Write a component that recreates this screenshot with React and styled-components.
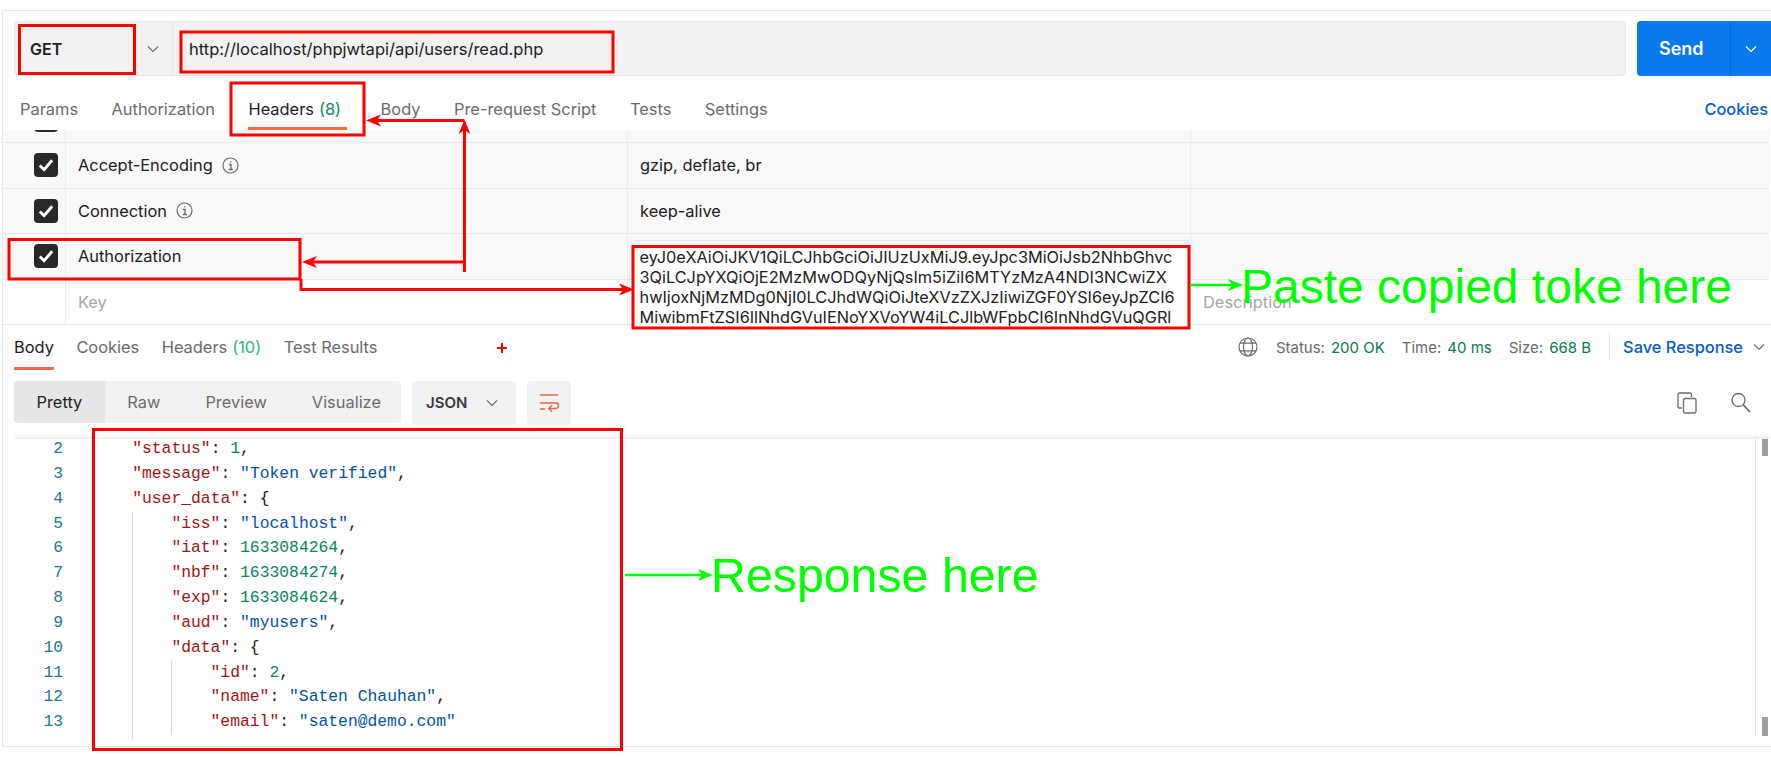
import React from 'react';
import styled, { createGlobalStyle } from 'styled-components';

const GlobalStyle = createGlobalStyle`
  html, body {
    margin: 0;
    background: #fff;
    font-family: Inter, "Liberation Sans", sans-serif;
    font-size: 16.4px;
    color: #212121;
  }
  * { box-sizing: border-box; }
`

const Page = styled.div`
  position: relative;
  width: 1771px;
  height: 757px;
  overflow: hidden;
  background: #fff;
`

const Frame = styled.div`
  margin: 10px 0 0 2px;
  height: 737px;
  border-top: 1px solid #e8e8e8;
  border-left: 1px solid #e8e8e8;
  border-bottom: 1px solid #e8e8e8;
  display: flex;
  flex-direction: column;
`

const RequestBar = styled.div`
  display: flex;
  gap: 11px;
  height: 55px;
  margin: 10px 0 0 11px;
  flex: none;
`

const UrlGroup = styled.div`
  display: flex;
  width: 1612px;
  background: #f2f2f2;
  border: 1px solid #e6e6e6;
  border-radius: 4px;
`

const MethodPicker = styled.div`
  display: flex;
  align-items: center;
  justify-content: space-between;
  width: 158px;
  padding: 0 12px 0 15px;
  border-right: 1px solid #e6e6e6;
  font-size: 16px;
  font-weight: 600;
`

const UrlText = styled.div`
  display: flex;
  align-items: center;
  padding-left: 16px;
  font-size: 16.55px;
`

const SendButton = styled.div`
  display: flex;
  align-items: center;
  width: 134px;
  background: #0a79ec;
  border-radius: 4px 0 0 4px;
  color: #fff;
`

const SendLabel = styled.span`
  width: 93px;
  padding-left: 22px;
  font-size: 18px;
  font-weight: 600;
`

const SendArrow = styled.span`
  display: flex;
  align-items: center;
  justify-content: center;
  flex: 1;
  height: 100%;
  border-left: 1px solid #0868cc;
`

const TabRow = styled.div`
  display: flex;
  align-items: stretch;
  gap: 33.5px;
  height: 54px;
  padding: 0 3px 0 17px;
  flex: none;
`

const Tab = styled.div`
  position: relative;
  display: flex;
  align-items: center;
  padding-top: 12px;
  padding-right: ${p => (p.$wide ? '6px' : '0')};
  color: ${p => (p.$active ? '#212121' : '#6b6b6b')};
  white-space: nowrap;

  ${p => p.$active && `
    &::after {
      content: '';
      position: absolute;
      left: 0;
      right: 0;
      bottom: 0;
      height: 3px;
      background: #f26b3a;
    }
  `}
`

const Count = styled.span`
  margin-left: 5px;
  color: ${p => (p.$light ? '#2cb67d' : '#0c8a5d')};
`

const CookiesLink = styled.div`
  display: flex;
  align-items: center;
  margin-left: auto;
  padding-top: 12px;
  color: #0b5cc4;
  font-weight: 500;
`

const HeaderTable = styled.div`
  flex: none;
`

const Row = styled.div`
  position: relative;
  display: grid;
  grid-template-columns: 61.500px 562px 563px 1fr;
  height: ${p => (p.$clipped ? '13px' : '45.5px')};
  overflow: ${p => (p.$clipped ? 'hidden' : 'visible')};
  background: ${p => (p.$blank ? '#fff' : '#f9f9f9')};
  border-bottom: 1px solid #e9e9e9;
  margin-right: ${p => (p.$blank ? '0' : '2px')};
`

const Cell = styled.div`
  display: flex;
  align-items: center;
  gap: 9px;
  padding-left: 12.5px;
  border-left: 1px solid #ececec;
  color: ${p => (p.$placeholder ? '#a6a6a6' : '#212121')};
  white-space: nowrap;
`

const CheckCell = styled.div`
  display: flex;
  align-items: ${p => (p.$clipped ? 'flex-start' : 'center')};
  justify-content: flex-end;
  padding-right: 7px;
`

const CheckBox = styled.span`
  display: flex;
  align-items: center;
  justify-content: center;
  flex: none;
  width: 24px;
  height: 24px;
  margin-top: ${p => (p.$clipped ? '-22.5px' : '0')};
  background: #282828;
  border-radius: 4px;
`

const TokenBox = styled.div`
  position: absolute;
  left: 630px;
  top: 6px;
  width: 556px;
  height: 88px;
  padding: 6px 0 0 5.5px;
  overflow: hidden;
  background: #fff;
  border: 1px solid #e6e6e6;
  z-index: 1;
  font-size: 16.3px;
`

const TokenLine = styled.div`
  height: 20px;
  line-height: 20px;
  white-space: nowrap;
`

const ResponseHeader = styled.div`
  display: flex;
  height: 44.5px;
  flex: none;
`

const ResponseTabs = styled.div`
  display: flex;
  gap: 22.5px;
  padding-left: 11px;
`

const ResponseTab = styled(Tab)`
  padding-top: 0;
`

const StatusGroup = styled.div`
  display: flex;
  align-items: center;
  margin-left: auto;
  padding-right: 5px;
  color: #6b6b6b;
  font-size: 15px;
  white-space: nowrap;
`

const StatusItem = styled.span`
  margin-left: ${p => p.$gap}px;
`

const StatusValue = styled.span`
  margin-left: 6px;
  color: #0c7a4e;
`

const Divider = styled.span`
  width: 1px;
  height: 28px;
  margin: 0 13px 0 18px;
  background: #e6e6e6;
`

const SaveLink = styled.span`
  margin-right: 9px;
  color: #0b5cc4;
  font-size: 16.4px;
  font-weight: 500;
`

const Toolbar = styled.div`
  display: flex;
  align-items: flex-start;
  height: 44px;
  margin: 11px 0 14px 11px;
  flex: none;
`

const Segments = styled.div`
  display: flex;
  height: 42px;
  width: 387px;
  background: #f2f2f2;
  border-radius: 4px;
  overflow: hidden;
`

const Segment = styled.div`
  display: flex;
  align-items: center;
  padding: 0 22.5px;
  color: ${p => (p.$active ? '#212121' : '#6b6b6b')};
  background: ${p => (p.$active ? '#e6e6e6' : 'transparent')};
`

const FormatPicker = styled.div`
  display: flex;
  align-items: center;
  justify-content: space-between;
  width: 104px;
  height: 44px;
  margin-left: 11px;
  padding: 0 17px 0 14px;
  background: #f2f2f2;
  border-radius: 4px;
  font-size: 15px;
  font-weight: 600;
  color: #3a3a3a;
`

const WrapButton = styled.div`
  display: flex;
  align-items: center;
  justify-content: center;
  width: 44px;
  height: 44px;
  margin-left: 11px;
  background: #f2f2f2;
  border-radius: 4px;
`

const ToolIcons = styled.div`
  display: flex;
  align-items: center;
  gap: 34px;
  height: 44px;
  margin-left: auto;
  padding-right: 20px;
`

const Editor = styled.div`
  position: relative;
  flex: 1;
  display: flex;
  margin-left: 11px;
  overflow: hidden;
  box-shadow: 0 -2px 4px rgba(0, 0, 0, 0.08);
  clip-path: inset(-6px 0 0 0);
  font-family: "Liberation Mono", monospace;
  font-size: 16.35px;
`

const Gutter = styled.div`
  width: 49px;
  margin-top: -1.5px;
  color: #237893;
  text-align: right;
`

const CodeColumn = styled.div`
  margin: -1.5px 0 0 30px;
`

const Line = styled.div`
  height: 24.85px;
  line-height: 24.85px;
  white-space: pre;
  padding-left: ${p => (p.$top ? '39.2px' : '0')};
`

const Nested = styled.div`
  margin-left: ${p => (p.$inner ? '0' : '39.2px')};
  padding-left: 38.2px;
  padding-bottom: ${p => (p.$pad ? p.$pad : 0)}px;
  border-left: 1px solid #d9d9d9;
`

const Key = styled.span`
  color: #a31515;
`

const Str = styled.span`
  color: #0451a5;
`

const Num = styled.span`
  color: #098658;
`

const ScrollTrack = styled.div`
  position: absolute;
  top: 0;
  right: 0;
  bottom: 10px;
  width: 16px;
  border-left: 1px solid #e0e0e0;
`

const ScrollThumb = styled.div`
  position: absolute;
  right: 3px;
  width: 6px;
  height: ${p => p.$size}px;
  ${p => (p.$end ? 'bottom: 0;' : 'top: 0;')}
  background: #a0a0a0;
`

const Overlay = styled.svg`
  position: absolute;
  inset: 0;
  pointer-events: none;
  z-index: 2;
`

const Callout = styled.div`
  position: absolute;
  left: ${p => p.$left}px;
  top: ${p => p.$top}px;
  font-family: "Liberation Sans", Arial, sans-serif;
  font-size: ${p => p.$size}px;
  line-height: 56px;
  color: #00ff00;
  white-space: nowrap;
  z-index: 3;
`

const Chevron = ({ size = 14, color = '#6b6b6b' }) => (
  <svg width={size} height={size} viewBox="0 0 14 14" fill="none" stroke={color} strokeWidth="1.1">
    <path d="M2 4.5 L7 9.5 L12 4.5" />
  </svg>
)

const InfoIcon = () => (
  <svg width="17" height="17" viewBox="0 0 17 17" fill="none" stroke="#6b6b6b">
    <circle cx="8.5" cy="8.5" r="7.5" strokeWidth="1.2" />
    <path d="M7 7.5 H9 V12.5 M6.8 12.5 H10.8" strokeWidth="1.3" />
    <path d="M8 4.2 H9.4 V5.6 H8 Z" fill="#6b6b6b" stroke="none" />
  </svg>
)

const CheckMark = () => (
  <svg width="18" height="18" viewBox="0 0 16 16" fill="none" stroke="#fff" strokeWidth="2.6">
    <path d="M2.5 8.5 L6.3 12.2 L13.5 3.8" />
  </svg>
)

const GlobeIcon = () => (
  <svg width="20" height="20" viewBox="0 0 20 20" fill="none" stroke="#6b6b6b" strokeWidth="1.2">
    <circle cx="10" cy="10" r="9" />
    <ellipse cx="10" cy="10" rx="4.5" ry="9" />
    <path d="M2 6.2 H18 M2 13.8 H18" />
  </svg>
)

const WrapIcon = () => (
  <svg width="20" height="22" viewBox="0 0 20 22" fill="none" stroke="#e8663a" strokeWidth="1.4">
    <path d="M1 3 H19 M1 11 H17 Q19.500 11 19.500 13.500 Q19.500 16.500 17 16.500 H10 M1 17 H6" />
    <path d="M13 13.200 L9.700 16.500 L13 19.800" />
  </svg>
)

const CopyIcon = () => (
  <svg width="20" height="22" viewBox="0 0 20 22" fill="none" stroke="#6b6b6b" strokeWidth="1.3">
    <path d="M5 16 H2.500 Q1 16 1 14.500 V2.500 Q1 1 2.500 1 H13 Q14.500 1 14.500 2.500 V5" />
    <rect x="6.500" y="6.500" width="12.500" height="14.500" rx="1.500" />
  </svg>
)

const SearchIcon = () => (
  <svg width="20" height="22" viewBox="0 0 20 22" fill="none" stroke="#6b6b6b" strokeWidth="1.3">
    <circle cx="7.500" cy="8" r="6.500" />
    <path d="M12.300 12.800 L19 20" strokeWidth="1.800" />
  </svg>
)

const heads = {
  left: (x, y) => `${x},${y} ${x + 15},${y - 6} ${x + 11},${y} ${x + 15},${y + 6}`,
  right: (x, y) => `${x},${y} ${x - 15},${y - 6} ${x - 11},${y} ${x - 15},${y + 6}`,
  up: (x, y) => `${x},${y} ${x - 6},${y + 14} ${x},${y + 10} ${x + 6},${y + 14}`,
}

const arrowHeads = [
  { dir: 'left', x: 366, y: 120.5, color: '#ff0000' },
  { dir: 'up', x: 464.5, y: 120, color: '#ff0000' },
  { dir: 'left', x: 302, y: 262, color: '#ff0000' },
  { dir: 'right', x: 634, y: 289.5, color: '#ff0000' },
  { dir: 'right', x: 1243, y: 285, color: '#00ff00' },
  { dir: 'right', x: 713, y: 575, color: '#00ff00' },
]

const redBoxes = [
  [19.5, 25.5, 115, 48],
  [181, 32, 432, 40],
  [231, 83, 133, 52],
  [9, 239.5, 291, 39.5],
  [633, 246.5, 556, 81.5],
  [93.5, 429.5, 528, 320],
]

const Annotations = () => (
  <Overlay width="1771" height="757" viewBox="0 0 1771 757" fill="none">
    {redBoxes.map(([x, y, w, h]) => (
      <rect key={`${x}-${y}`} x={x} y={y} width={w} height={h} stroke="#ff0000" strokeWidth="3" />
    ))}
    <g stroke="#ff0000" strokeWidth="3">
      <path d="M464.5 272 V122 M464.5 120.500 H370" />
      <path d="M463 262 H310" />
      <path d="M301 279 V289.500 H625" />
    </g>
    <path d="M497 348 H507 M502 343 V353" stroke="#ff0000" strokeWidth="2" />
    <g stroke="#00ff00" strokeWidth="2.500">
      <path d="M1191 285 H1235" />
      <path d="M625 575 H705" />
    </g>
    {arrowHeads.map(a => (
      <polygon key={`${a.x}-${a.y}`} points={heads[a.dir](a.x, a.y)} fill={a.color} />
    ))}
  </Overlay>
)

const tokenLines = [
  'eyJ0eXAiOiJKV1QiLCJhbGciOiJIUzUxMiJ9.eyJpc3MiOiJsb2NhbGhvc',
  '3QiLCJpYXQiOjE2MzMwODQyNjQsIm5iZiI6MTYzMzA4NDI3NCwiZX',
  'hwIjoxNjMzMDg0NjI0LCJhdWQiOiJteXVzZXJzIiwiZGF0YSI6eyJpZCI6',
  'MiwibmFtZSI6IlNhdGVuIENoYXVoYW4iLCJlbWFpbCI6InNhdGVuQGRl',
]

const lineNumbers = [2, 3, 4, 5, 6, 7, 8, 9, 10, 11, 12, 13]

const HeaderRow = ({ name, value, info, children }) => (
  <Row>
    <CheckCell>
      <CheckBox><CheckMark /></CheckBox>
    </CheckCell>
    <Cell>{name}{info && <InfoIcon />}</Cell>
    <Cell>{value}</Cell>
    <Cell />
    {children}
  </Row>
)

export default function App() {
  return (
    <Page>
      <GlobalStyle />
      <Frame>
        <RequestBar>
          <UrlGroup>
            <MethodPicker>GET <Chevron /></MethodPicker>
            <UrlText>http://localhost/phpjwtapi/api/users/read.php</UrlText>
          </UrlGroup>
          <SendButton>
            <SendLabel>Send</SendLabel>
            <SendArrow><Chevron color="#fff" /></SendArrow>
          </SendButton>
        </RequestBar>

        <TabRow>
          <Tab>Params</Tab>
          <Tab>Authorization</Tab>
          <Tab $active $wide>Headers <Count>(8)</Count></Tab>
          <Tab>Body</Tab>
          <Tab>Pre-request Script</Tab>
          <Tab>Tests</Tab>
          <Tab>Settings</Tab>
          <CookiesLink>Cookies</CookiesLink>
        </TabRow>

        <HeaderTable>
          <Row $clipped>
            <CheckCell $clipped>
              <CheckBox $clipped><CheckMark /></CheckBox>
            </CheckCell>
            <Cell />
            <Cell />
            <Cell />
          </Row>
          <HeaderRow name="Accept-Encoding" value="gzip, deflate, br" info />
          <HeaderRow name="Connection" value="keep-alive" info />
          <HeaderRow name="Authorization">
            <TokenBox>
              {tokenLines.map(line => <TokenLine key={line}>{line}</TokenLine>)}
            </TokenBox>
          </HeaderRow>
          <Row $blank>
            <CheckCell />
            <Cell $placeholder>Key</Cell>
            <Cell />
            <Cell $placeholder>Description</Cell>
          </Row>
        </HeaderTable>

        <ResponseHeader>
          <ResponseTabs>
            <ResponseTab $active>Body</ResponseTab>
            <ResponseTab>Cookies</ResponseTab>
            <ResponseTab>Headers <Count $light>(10)</Count></ResponseTab>
            <ResponseTab>Test Results</ResponseTab>
          </ResponseTabs>
          <StatusGroup>
            <GlobeIcon />
            <StatusItem $gap={18}>Status:<StatusValue>200 OK</StatusValue></StatusItem>
            <StatusItem $gap={17}>Time:<StatusValue>40 ms</StatusValue></StatusItem>
            <StatusItem $gap={17}>Size:<StatusValue>668 B</StatusValue></StatusItem>
            <Divider />
            <SaveLink>Save Response</SaveLink>
            <Chevron />
          </StatusGroup>
        </ResponseHeader>

        <Toolbar>
          <Segments>
            <Segment $active>Pretty</Segment>
            <Segment>Raw</Segment>
            <Segment>Preview</Segment>
            <Segment>Visualize</Segment>
          </Segments>
          <FormatPicker>JSON <Chevron /></FormatPicker>
          <WrapButton><WrapIcon /></WrapButton>
          <ToolIcons>
            <CopyIcon />
            <SearchIcon />
          </ToolIcons>
        </Toolbar>

        <Editor>
          <Gutter>
            {lineNumbers.map(n => <Line key={n}>{n}</Line>)}
          </Gutter>
          <CodeColumn>
            <Line $top><Key>"status"</Key>: <Num>1</Num>,</Line>
            <Line $top><Key>"message"</Key>: <Str>"Token verified"</Str>,</Line>
            <Line $top><Key>"user_data"</Key>: {'{'}</Line>
            <Nested $pad={4}>
              <Line><Key>"iss"</Key>: <Str>"localhost"</Str>,</Line>
              <Line><Key>"iat"</Key>: <Num>1633084264</Num>,</Line>
              <Line><Key>"nbf"</Key>: <Num>1633084274</Num>,</Line>
              <Line><Key>"exp"</Key>: <Num>1633084624</Num>,</Line>
              <Line><Key>"aud"</Key>: <Str>"myusers"</Str>,</Line>
              <Line><Key>"data"</Key>: {'{'}</Line>
              <Nested $inner>
                <Line><Key>"id"</Key>: <Num>2</Num>,</Line>
                <Line><Key>"name"</Key>: <Str>"Saten Chauhan"</Str>,</Line>
                <Line><Key>"email"</Key>: <Str>"saten@demo.com"</Str></Line>
              </Nested>
            </Nested>
          </CodeColumn>
          <ScrollTrack>
            <ScrollThumb $size={17} />
            <ScrollThumb $size={19} $end />
          </ScrollTrack>
        </Editor>
      </Frame>
      <Annotations />
      <Callout $left={1241} $top={259} $size={48}>Paste copied toke here</Callout>
      <Callout $left={711} $top={547} $size={48.3}>Response here</Callout>
    </Page>
  );
}
